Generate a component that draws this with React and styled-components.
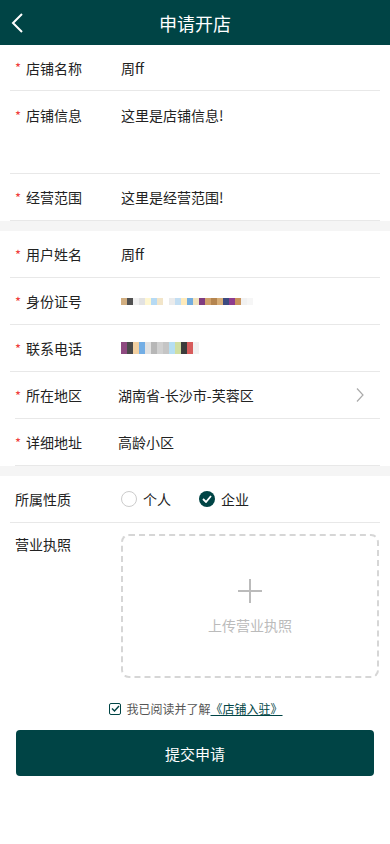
import React from 'react'
import styled, { createGlobalStyle } from 'styled-components'

const Global = createGlobalStyle`
  body {
    margin: 0;
    background: #fff;
    font-family: "Noto Sans CJK SC", "Noto Sans", sans-serif;
    color: #222;
  }
`

const idPixels = ['#c9a06a', '#333', '#eee', '#ddd', '#fff6c9', '#a9d4f2', '#f0e0c0', '#fff', '#e8e8e8', '#b8d8f0', '#ffe8b0', '#5a9fd8', '#eeddb0', '#6a1a6a', '#c89050', '#a87030', '#d0a060', '#1a2a6a', '#7a1a7a', '#c08040', '#eee', '#f4f4f4']
const phonePixels = ['#7a2a6a', '#2a2a2a', '#f0c890', '#5aa0e0', '#ddd', '#aaa', '#c8c8c8', '#bbb', '#a8d8f0', '#c8d890', '#1a1a1a', '#d04040', '#eee']

function App() {
    return (
        <Page>
            <Global />
            <Header>
                <Back>
                    <svg width="14" height="22" viewBox="0 0 14 22">
                        <path d="M12 2 L3 11 L12 20" fill="none" stroke="#fff" strokeWidth="2" />
                    </svg>
                </Back>
                <Title>申请开店</Title>
            </Header>

            <Section>
                <Row first>
                    <Label required>店铺名称</Label>
                    <Value>周ff</Value>
                </Row>
                <Row tall>
                    <Label required>店铺信息</Label>
                    <Value>这里是店铺信息!</Value>
                </Row>
                <Row>
                    <Label required>经营范围</Label>
                    <Value>这里是经营范围!</Value>
                </Row>
            </Section>

            <Gap />

            <Section>
                <Row>
                    <Label required>用户姓名</Label>
                    <Value>周ff</Value>
                </Row>
                <Row>
                    <Label required>身份证号</Label>
                    <Masked>
                        {idPixels.map((c, i) => <Pixel key={i} color={c} />)}
                    </Masked>
                </Row>
                <Row>
                    <Label required>联系电话</Label>
                    <Masked>
                        {phonePixels.map((c, i) => <Pixel key={i} color={c} tall />)}
                    </Masked>
                </Row>
                <Row inset>
                    <Label required>所在地区</Label>
                    <Value shift>湖南省-长沙市-芙蓉区</Value>
                    <Arrow>
                        <svg width="10" height="16" viewBox="0 0 10 16">
                            <path d="M2 1.5 L8 8 L2 14.5" fill="none" stroke="#aaa" strokeWidth="1.2" />
                        </svg>
                    </Arrow>
                </Row>
                <Row inset>
                    <Label required>详细地址</Label>
                    <Value shift>高龄小区</Value>
                </Row>
            </Section>

            <Gap />

            <Section>
                <Row>
                    <Label>所属性质</Label>
                    <Radios>
                        <Radio>
                            <Circle />
                            个人
                        </Radio>
                        <Radio>
                            <Circle checked>
                                <svg width="10" height="8" viewBox="0 0 10 8">
                                    <path d="M1 4 L4 7 L9 1" fill="none" stroke="#fff" strokeWidth="1.8" />
                                </svg>
                            </Circle>
                            企业
                        </Radio>
                    </Radios>
                </Row>
                <UploadRow>
                    <Label top>营业执照</Label>
                    <Upload>
                        <svg width="28" height="28" viewBox="0 0 28 28">
                            <path d="M14 2 V26 M2 14 H26" stroke="#bbb" strokeWidth="2" />
                        </svg>
                        <UploadText>上传营业执照</UploadText>
                    </Upload>
                </UploadRow>
            </Section>

            <Agree>
                <Check>
                    <svg width="9" height="7" viewBox="0 0 9 7">
                        <path d="M1 3.5 L3.5 6 L8 1" fill="none" stroke="#004445" strokeWidth="1.4" />
                    </svg>
                </Check>
                我已阅读并了解<AgreeLink>《店铺入驻》</AgreeLink>
            </Agree>

            <Submit>提交申请</Submit>
        </Page>
    )
}

export default App

const Page = styled.div`
width:390px;
min-height:844px;
background:#fff;
`

const Header = styled.div`
height:45px;
background:#004445;
display:flex;
align-items:center;
justify-content:center;
position:relative;
`

const Back = styled.div`
position:absolute;
left:10px;
top:12px;
display:flex;
`

const Title = styled.div`
color:#fff;
font-size:18px;
`

const Section = styled.div`
padding:0 10px;
`

const Row = styled.div`
height:${p => p.tall ? '83px' : p.first ? '46px' : '47px'};
display:flex;
align-items:${p => p.tall ? 'flex-start' : 'center'};
padding-top:${p => p.tall ? '14px' : '0'};
box-sizing:border-box;
border-bottom:1px solid #e8e8e8;
margin-left:${p => p.inset ? '5px' : '0'};
padding-left:${p => p.inset ? '0' : '5px'};
`

const Label = styled.div`
width:106px;
flex-shrink:0;
align-self:${p => p.top ? 'flex-start' : 'auto'};
font-size:14px;
color:#222;
display:flex;
align-items:center;
&::before{
    content:'*';
    color:#f03c3c;
    font-size:13px;
    width:11px;
    display:${p => p.required ? 'inline-block' : 'none'};
}
`

const Value = styled.div`
font-size:14px;
color:#222;
margin-left:${p => p.shift ? '-3px' : '0'};
`

const Masked = styled.div`
display:flex;
align-items:center;
height:14px;
`

const Pixel = styled.span`
width:6px;
height:${p => p.tall ? '12px' : '7px'};
background:${p => p.color};
opacity:0.85;
`

const Arrow = styled.div`
margin-left:auto;
margin-right:15px;
display:flex;
`

const Gap = styled.div`
height:10px;
background:#f5f5f5;
`

const Radios = styled.div`
display:flex;
gap:28px;
`

const Radio = styled.div`
display:flex;
align-items:center;
gap:6px;
font-size:14px;
color:#222;
`

const Circle = styled.span`
width:16px;
height:16px;
border-radius:50%;
box-sizing:border-box;
border:${p => p.checked ? 'none' : '1px solid #ccc'};
background:${p => p.checked ? '#004445' : '#fff'};
display:flex;
align-items:center;
justify-content:center;
`

const UploadRow = styled.div`
display:flex;
padding:11px 0 0 5px;
`

const Upload = styled.div`
width:258px;
height:144px;
box-sizing:border-box;
border:2px dashed #d6d6d6;
border-radius:8px;
display:flex;
flex-direction:column;
align-items:center;
justify-content:center;
`

const UploadText = styled.div`
font-size:14px;
color:#bbb;
margin-top:10px;
`

const Agree = styled.div`
display:flex;
align-items:center;
justify-content:center;
font-size:12px;
color:#555;
margin-top:22px;
padding-left:2px;
`

const Check = styled.span`
width:12px;
height:12px;
box-sizing:border-box;
border:1px solid #004445;
border-radius:2px;
display:flex;
align-items:center;
justify-content:center;
margin-right:5px;
`

const AgreeLink = styled.span`
color:#004445;
text-decoration:underline;
`

const Submit = styled.div`
margin:13px 16px 0;
height:46px;
background:#004445;
border-radius:4px;
color:#fff;
font-size:15px;
display:flex;
align-items:center;
justify-content:center;
`
